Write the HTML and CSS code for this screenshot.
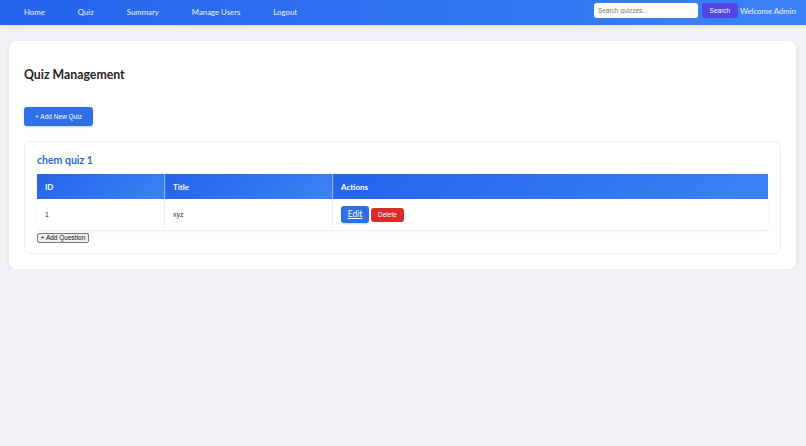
FILE: index.html
```html
<!DOCTYPE html>
<html lang="en">
<head>
  <meta charset="UTF-8">
  <meta name="viewport" content="width=device-width, initial-scale=1.0">
  <title>Quiz Management</title>
  <link rel="stylesheet" href="styles.css">
</head>
<body>
  <nav class="navbar">
    <div class="nav-links">
      <a href="#">Home</a>
      <a href="#">Quiz</a>
      <a href="#">Summary</a>
      <a href="#">Manage Users</a>
      <a href="#">Logout</a>
    </div>
    <div class="nav-right">
      <form class="search-form">
        <input type="text" class="search-input" placeholder="Search quizzes...">
        <button type="submit" class="search-btn">Search</button>
      </form>
      <span class="welcome">Welcome Admin</span>
    </div>
  </nav>

  <div class="container">
    <h2>Quiz Management</h2>
    <button class="add-quiz-btn">+ Add New Quiz</button>

    <div class="quiz-card">
      <h3>chem quiz 1</h3>
      <table class="question-table">
        <thead>
          <tr>
            <th class="col-id">ID</th>
            <th class="col-title">Title</th>
            <th>Actions</th>
          </tr>
        </thead>
        <tbody>
          <tr>
            <td>1</td>
            <td>xyz</td>
            <td>
              <a href="#" class="edit-btn">Edit</a>
              <button class="delete-btn">Delete</button>
            </td>
          </tr>
        </tbody>
      </table>
      <button class="add-question-btn">+ Add Question</button>
    </div>
  </div>
</body>
</html>
```

FILE: styles.css
```css
body {
  font-family: Lato, "Noto Sans", sans-serif;
  background-color: #f0f1f5;
  margin: 0;
  padding: 0;
}

.navbar {
  display: flex;
  justify-content: space-between;
  align-items: center;
  height: 25px;
  padding: 0 10px 0 24px;
  background: linear-gradient(90deg, #2563eb, #3b82f6);
  box-shadow: 0 1px 3px rgba(0, 0, 0, 0.1);
}

.nav-links {
  display: flex;
  gap: 33px;
  padding-bottom: 2px;
}

.nav-links a {
  color: #eef3ff;
  text-decoration: none;
  font-size: 7.8px;
}

.nav-right {
  display: flex;
  align-items: center;
  gap: 2px;
  margin-top: -4px;
}

.search-form {
  display: flex;
  gap: 4px;
  margin: 0;
}

.search-input {
  width: 104px;
  height: 15px;
  box-sizing: border-box;
  border: none;
  border-radius: 3px;
  padding: 0 4px;
  font-family: "Liberation Sans", Arial, sans-serif;
  font-size: 6.5px;
  background: #ffffff;
}

.search-input::placeholder {
  color: #777777;
}

.search-btn {
  width: 36px;
  height: 15px;
  border: none;
  border-radius: 3px;
  background-color: #4f46e5;
  color: #ffffff;
  font-family: "Liberation Sans", Arial, sans-serif;
  font-size: 6.5px;
  padding: 0;
}

.welcome {
  color: #eef3ff;
  font-size: 7.8px;
}

.container {
  background: #ffffff;
  margin: 16px 10px 0 9px;
  padding: 15px 15px 15px;
  border-radius: 7px;
  box-shadow: 0 1px 4px rgba(0, 0, 0, 0.08);
}

h2 {
  font-size: 12.3px;
  color: #1f2328;
  margin: 11px 0 24px;
  line-height: 16px;
}

.add-quiz-btn {
  display: block;
  width: 69px;
  height: 19px;
  padding: 0;
  border: none;
  border-radius: 3px;
  background-color: #2f6fe8;
  color: #ffffff;
  font-family: "Liberation Sans", Arial, sans-serif;
  font-size: 6.5px;
  box-shadow: 0 1px 2px rgba(37, 99, 235, 0.3);
}

.quiz-card {
  margin-top: 15px;
  padding: 11px 12px 10px;
  border: 1px solid #eef0f3;
  border-radius: 6px;
}

h3 {
  font-size: 10.5px;
  color: #2f66d6;
  margin: 0 0 7px;
  line-height: 14px;
}

.question-table {
  width: 100%;
  border-collapse: collapse;
  box-shadow: 0 0 3px rgba(0, 0, 0, 0.06);
  border-radius: 4px;
}

.question-table th {
  height: 25px;
  padding: 0 8px;
  text-align: left;
  color: #ffffff;
  font-size: 8px;
  font-weight: bold;
  background: linear-gradient(135deg, #2563eb, #3b82f6);
  border-right: 1px solid #8fb3f7;
}

.question-table th:last-child {
  border-right: none;
}

.col-id {
  width: 111px;
}

.col-title {
  width: 151px;
}

.question-table td {
  height: 31px;
  padding: 0 8px;
  font-family: "Liberation Sans", Arial, sans-serif;
  font-size: 7px;
  color: #333333;
  border-right: 1px solid #eef0f3;
  border-bottom: 1px solid #eef0f3;
}

.question-table td:last-child {
  border-right: none;
}

.edit-btn {
  display: inline-block;
  width: 28px;
  height: 17px;
  line-height: 17px;
  text-align: center;
  vertical-align: middle;
  background-color: #2f6fe8;
  color: #ffffff;
  font-family: Lato, sans-serif;
  font-size: 8.5px;
  border-radius: 3px;
  box-shadow: 0 1px 2px rgba(37, 99, 235, 0.3);
}

.delete-btn {
  width: 33px;
  height: 14px;
  padding: 0;
  vertical-align: middle;
  border: none;
  border-radius: 3px;
  background-color: #dc2b2b;
  color: #ffffff;
  font-family: "Liberation Sans", Arial, sans-serif;
  font-size: 6.5px;
}

.add-question-btn {
  display: block;
  margin-top: 2px;
  width: 52px;
  height: 10px;
  padding: 0;
  font-family: "Liberation Sans", Arial, sans-serif;
  font-size: 6.5px;
  line-height: 8px;
  color: #111111;
  background: #efefef;
  border: 1px solid #777777;
  border-radius: 2px;
}
```
